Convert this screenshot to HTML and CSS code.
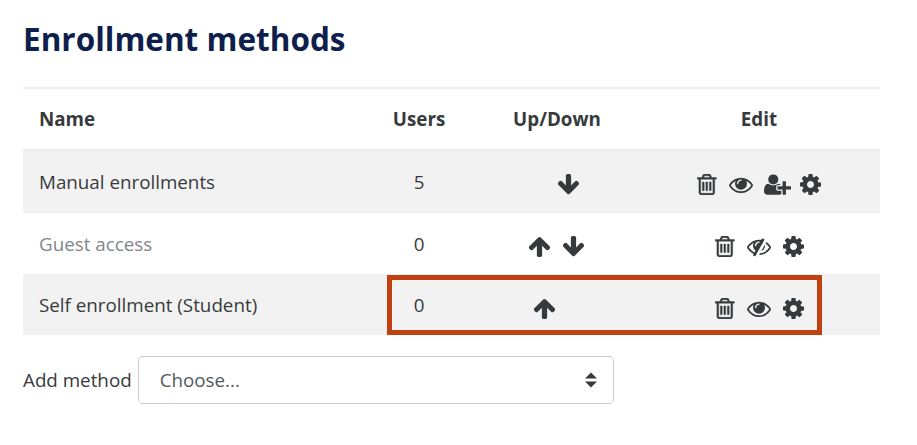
FILE: index.html
```html
<!DOCTYPE html>
<html lang="en">
<head>
    <meta charset="UTF-8">
    <meta name="viewport" content="width=device-width, initial-scale=1.0">
    <title>Enrollment methods</title>
    <link rel="stylesheet" href="styles.css">
</head>
<body>
    <!-- Icon sprite -->
    <svg class="sprite" xmlns="http://www.w3.org/2000/svg">
        <symbol id="i-trash" viewBox="224 128 1376 1536"><path d="M704 736v576q0 14-9 23t-23 9h-64q-14 0-23-9t-9-23v-576q0-14 9-23t23-9h64q14 0 23 9t9 23zm256 0v576q0 14-9 23t-23 9h-64q-14 0-23-9t-9-23v-576q0-14 9-23t23-9h64q14 0 23 9t9 23zm256 0v576q0 14-9 23t-23 9h-64q-14 0-23-9t-9-23v-576q0-14 9-23t23-9h64q14 0 23 9t9 23zm128 724v-948h-896v948q0 22 7 40.500t14.500 27 10.500 8.500h832q3 0 10.500-8.500t14.500-27 7-40.500zm-672-1076h448l-48-117q-7-9-17-11h-317q-10 2-17 11zm928 32v64q0 14-9 23t-23 9h-96v948q0 83-47 143.500t-113 60.500h-832q-66 0-113-58.500t-47-141.500v-952h-96q-14 0-23-9t-9-23v-64q0-14 9-23t23-9h309l70-167q15-37 54-63t79-26h320q40 0 79 26t54 63l70 167h309q14 0 23 9t9 23z"/></symbol>
        <symbol id="i-eye" viewBox="0 128 1792 1536"><path d="M1664 960q-152-236-381-353 61 104 61 225 0 185-131.500 316.500t-316.500 131.500-316.500-131.500-131.500-316.500q0-121 61-225-229 117-381 353 133 205 333.500 326.500t434.500 121.500 434.500-121.500 333.500-326.500zm-720-384q0-20-14-34t-34-14q-125 0-214.500 89.500t-89.500 214.500q0 20 14 34t34 14 34-14 14-34q0-86 61-147t147-61q20 0 34-14t14-34zm848 384q0 34-20 69-140 230-376.500 368.500t-499.500 138.500-499.500-139-376.500-368q-20-35-20-69t20-69q140-229 376.500-368t499.500-139 499.500 139 376.500 368q20 35 20 69z"/></symbol>
        <symbol id="i-eye-slash" viewBox="0 128 1792 1536"><path d="M555 1335l78-141q-87-63-136-159t-49-203q0-121 61-225-229 117-381 353 167 258 427 375zm389-759q0-20-14-34t-34-14q-125 0-214.500 89.500t-89.500 214.500q0 20 14 34t34 14 34-14 14-34q0-86 61-147t147-61q20 0 34-14t14-34zm363-191q0 7-1 9-106 189-316 567t-315 566l-49 89q-10 16-28 16-12 0-134-70-16-10-16-28 0-12 44-87-143-65-263.500-173t-208.500-245q-20-31-20-69t20-69q153-235 380-371t496-136q89 0 180 17l54-97q10-16 28-16 5 0 18 6t31 15.500 33 18.500 31.500 18.500 19.500 11.500q16 10 16 27zm37 447q0 139-79 253.500t-209 164.500l280-502q8 45 8 84zm448 128q0 35-20 69-39 64-109 145-150 172-347.500 267t-419.500 95l74-132q212-18 392.500-137t301.500-307q-115-179-282-294l63-112q95 64 182.500 153t144.500 184q20 34 20 69z"/></symbol>
        <symbol id="i-user-plus" viewBox="0 128 2048 1536"><path d="M704 896q-159 0-271.500-112.500t-112.500-271.500 112.500-271.500 271.500-112.500 271.500 112.500 112.500 271.500-112.500 271.500-271.500 112.500zm960 128h352q13 0 22.500 9.500t9.500 22.500v192q0 13-9.500 22.500t-22.500 9.500h-352v352q0 13-9.500 22.500t-22.500 9.500h-192q-13 0-22.500-9.500t-9.500-22.500v-352h-352q-13 0-22.500-9.500t-9.500-22.500v-192q0-13 9.500-22.500t22.500-9.500h352v-352q0-13 9.500-22.500t22.500-9.500h192q13 0 22.500 9.500t9.500 22.500v352zm-736 224q0 52 38 90t90 38h256v238q-68 50-171 50h-874q-121 0-194-69t-73-190q0-53 3.500-103.500t14-109 26.500-108.500 43-97.500 62-81 85.500-53.500 111.500-20q19 0 39 17 79 61 154.500 91.500t164.500 30.500 164.500-30.500 154.500-91.500q20-17 39-17 132 0 217 96h-223q-52 0-90 38t-38 90v192z"/></symbol>
        <symbol id="i-cog" viewBox="128 128 1536 1536"><path d="M1152 896q0-106-75-181t-181-75-181 75-75 181 75 181 181 75 181-75 75-181zm512-109v222q0 12-8 23t-20 13l-185 28q-19 54-39 91 35 50 107 138 10 12 10 25t-9 23q-27 37-99 108t-94 71q-12 0-26-9l-138-108q-44 23-91 38-16 136-29 186-7 28-36 28h-222q-14 0-24.500-8.500t-11.500-21.500l-28-184q-49-16-90-37l-141 107q-10 9-25 9-14 0-25-11-126-114-165-168-7-10-7-23 0-12 8-23 15-21 51-66.500t54-70.500q-27-50-41-99l-183-27q-13-2-21-12.500t-8-23.500v-222q0-12 8-23t19-13l186-28q14-46 39-92-40-57-107-138-10-12-10-24 0-10 9-23 26-36 98.500-107.500t94.500-71.500q13 0 26 10l138 107q44-23 91-38 16-136 29-186 7-28 36-28h222q14 0 24.500 8.500t11.500 21.500l28 184q49 16 90 37l142-107q9-9 24-9 13 0 25 10 129 119 165 170 7 8 7 22 0 12-8 23-15 21-51 66.500t-54 70.500q26 50 41 98l183 28q13 2 21 12.500t8 23.500z"/></symbol>
        <symbol id="i-up" viewBox="128 128 1536 1536"><path d="M1675 971q0 51-37 90l-75 75q-38 38-91 38-54 0-90-38l-294-293v704q0 52-37.500 84.500t-90.500 32.500h-128q-53 0-90.500-32.500t-37.500-84.500v-704l-294 293q-36 38-90 38t-90-38l-75-75q-38-38-38-90 0-53 38-91l651-651q35-37 90-37 54 0 91 37l651 651q37 39 37 91z"/></symbol>
        <symbol id="i-down" viewBox="128 128 1536 1536"><path d="M1675 832q0 53-37 90l-651 652q-39 37-91 37-53 0-90-37l-651-652q-38-36-38-90 0-53 38-91l74-75q39-37 91-37 53 0 90 37l294 294v-704q0-52 38-90t90-38h128q52 0 90 38t38 90v704l294-294q37-37 90-37 52 0 91 37l75 75q37 39 37 91z"/></symbol>
    </svg>

    <div class="container">
        <h1>Enrollment methods</h1>

        <div class="table-wrap">
            <table class="methods">
                <thead>
                    <tr>
                        <th class="col-name">Name</th>
                        <th class="col-users">Users</th>
                        <th class="col-move">Up/Down</th>
                        <th class="col-edit">Edit</th>
                    </tr>
                </thead>
                <tbody>
                    <tr class="striped">
                        <td>Manual enrollments</td>
                        <td class="center">5</td>
                        <td>
                            <div class="icons move">
                                <span class="spacer"></span>
                                <svg class="icon"><use href="#i-down"/></svg>
                            </div>
                        </td>
                        <td>
                            <div class="icons">
                                <svg class="icon trash"><use href="#i-trash"/></svg>
                                <svg class="icon eye"><use href="#i-eye"/></svg>
                                <svg class="icon user"><use href="#i-user-plus"/></svg>
                                <svg class="icon"><use href="#i-cog"/></svg>
                            </div>
                        </td>
                    </tr>
                    <tr class="disabled">
                        <td>Guest access</td>
                        <td class="center">0</td>
                        <td>
                            <div class="icons move">
                                <svg class="icon"><use href="#i-up"/></svg>
                                <svg class="icon"><use href="#i-down"/></svg>
                            </div>
                        </td>
                        <td>
                            <div class="icons">
                                <svg class="icon trash"><use href="#i-trash"/></svg>
                                <svg class="icon eye"><use href="#i-eye-slash"/></svg>
                                <svg class="icon"><use href="#i-cog"/></svg>
                            </div>
                        </td>
                    </tr>
                    <tr class="striped last">
                        <td>Self enrollment (Student)</td>
                        <td class="center">0</td>
                        <td>
                            <div class="icons move">
                                <svg class="icon"><use href="#i-up"/></svg>
                                <span class="spacer"></span>
                            </div>
                        </td>
                        <td>
                            <div class="icons">
                                <svg class="icon trash"><use href="#i-trash"/></svg>
                                <svg class="icon eye"><use href="#i-eye"/></svg>
                                <svg class="icon"><use href="#i-cog"/></svg>
                            </div>
                        </td>
                    </tr>
                </tbody>
            </table>
            <!-- Annotation box round the self enrollment row -->
            <div class="highlight"></div>
        </div>

        <form class="add-method">
            <label for="method">Add method</label>
            <div class="select-wrap">
                <select id="method">
                    <option>Choose...</option>
                </select>
                <svg class="caret" viewBox="0 0 13 16"><path d="M6.500 0L13 6.500H0zM0 9.500h13L6.500 16z"/></svg>
            </div>
        </form>
    </div>
</body>
</html>
```

FILE: styles.css
```css
/* General Body Styles */
body {
    font-family: "Open Sans", sans-serif;
    font-size: 18.8px;
    color: #373a3c;
    background: #fff;
    margin: 0;
}

.sprite {
    display: none;
}

.container {
    padding: 18px 37px 0 23px;
}

h1 {
    font-size: 31.5px;
    line-height: 42px;
    font-weight: 700;
    color: #0f1f4d;
    margin: 0 0 27px;
}

/* Table */
.table-wrap {
    position: relative;
}

.methods {
    width: 100%;
    border-collapse: collapse;
    table-layout: fixed;
    border-top: 2px solid #eceeef;
}

.methods th {
    height: 60px;
    padding: 0 16px;
    font-weight: 700;
    text-align: center;
    border-bottom: 2px solid #eceeef;
}

.methods th.col-name {
    text-align: left;
}

.col-name {
    width: 307px;
}

.col-users {
    width: 82px;
}

.col-move {
    width: 130px;
}

.methods td {
    height: 61px;
    padding: 0 16px;
    border-top: 1px solid #eceeef;
}

.methods .last td {
    height: 60px;
}

.center {
    text-align: center;
}

.striped {
    background: #f2f2f2;
}

.disabled td:first-child {
    color: #7f878d;
}

/* Action icons */
.icons {
    display: flex;
    justify-content: center;
    align-items: center;
    gap: 12px;
    padding-top: 6px;
}

.move {
    gap: 13px;
    padding-right: 1px;
}

.spacer {
    width: 11px;
}

.icon {
    display: block;
    width: 21px;
    height: 21px;
    fill: #373a3c;
}

.trash {
    width: 20px;
    stroke: #373a3c;
    stroke-width: 30px;
}

.eye {
    width: 24px;
}

.user {
    width: 27px;
    margin: 0 -3px 0 -1px;
}

/* Highlight box */
.highlight {
    position: absolute;
    left: 364px;
    right: 58px;
    bottom: 0;
    height: 60px;
    border: 5px solid #c1400f;
    box-sizing: border-box;
}

/* Add method form */
.add-method {
    display: flex;
    align-items: center;
    gap: 6px;
    margin-top: 21px;
}

.select-wrap {
    position: relative;
}

select {
    display: block;
    width: 476px;
    height: 48px;
    padding: 0 21px;
    font-family: inherit;
    font-size: 18.8px;
    color: #55595c;
    background: #fff;
    border: 1px solid #ccc;
    border-radius: 5px;
    appearance: none;
}

.caret {
    position: absolute;
    top: 16px;
    right: 17px;
    width: 12px;
    height: 16px;
    fill: #373a3c;
}
```
